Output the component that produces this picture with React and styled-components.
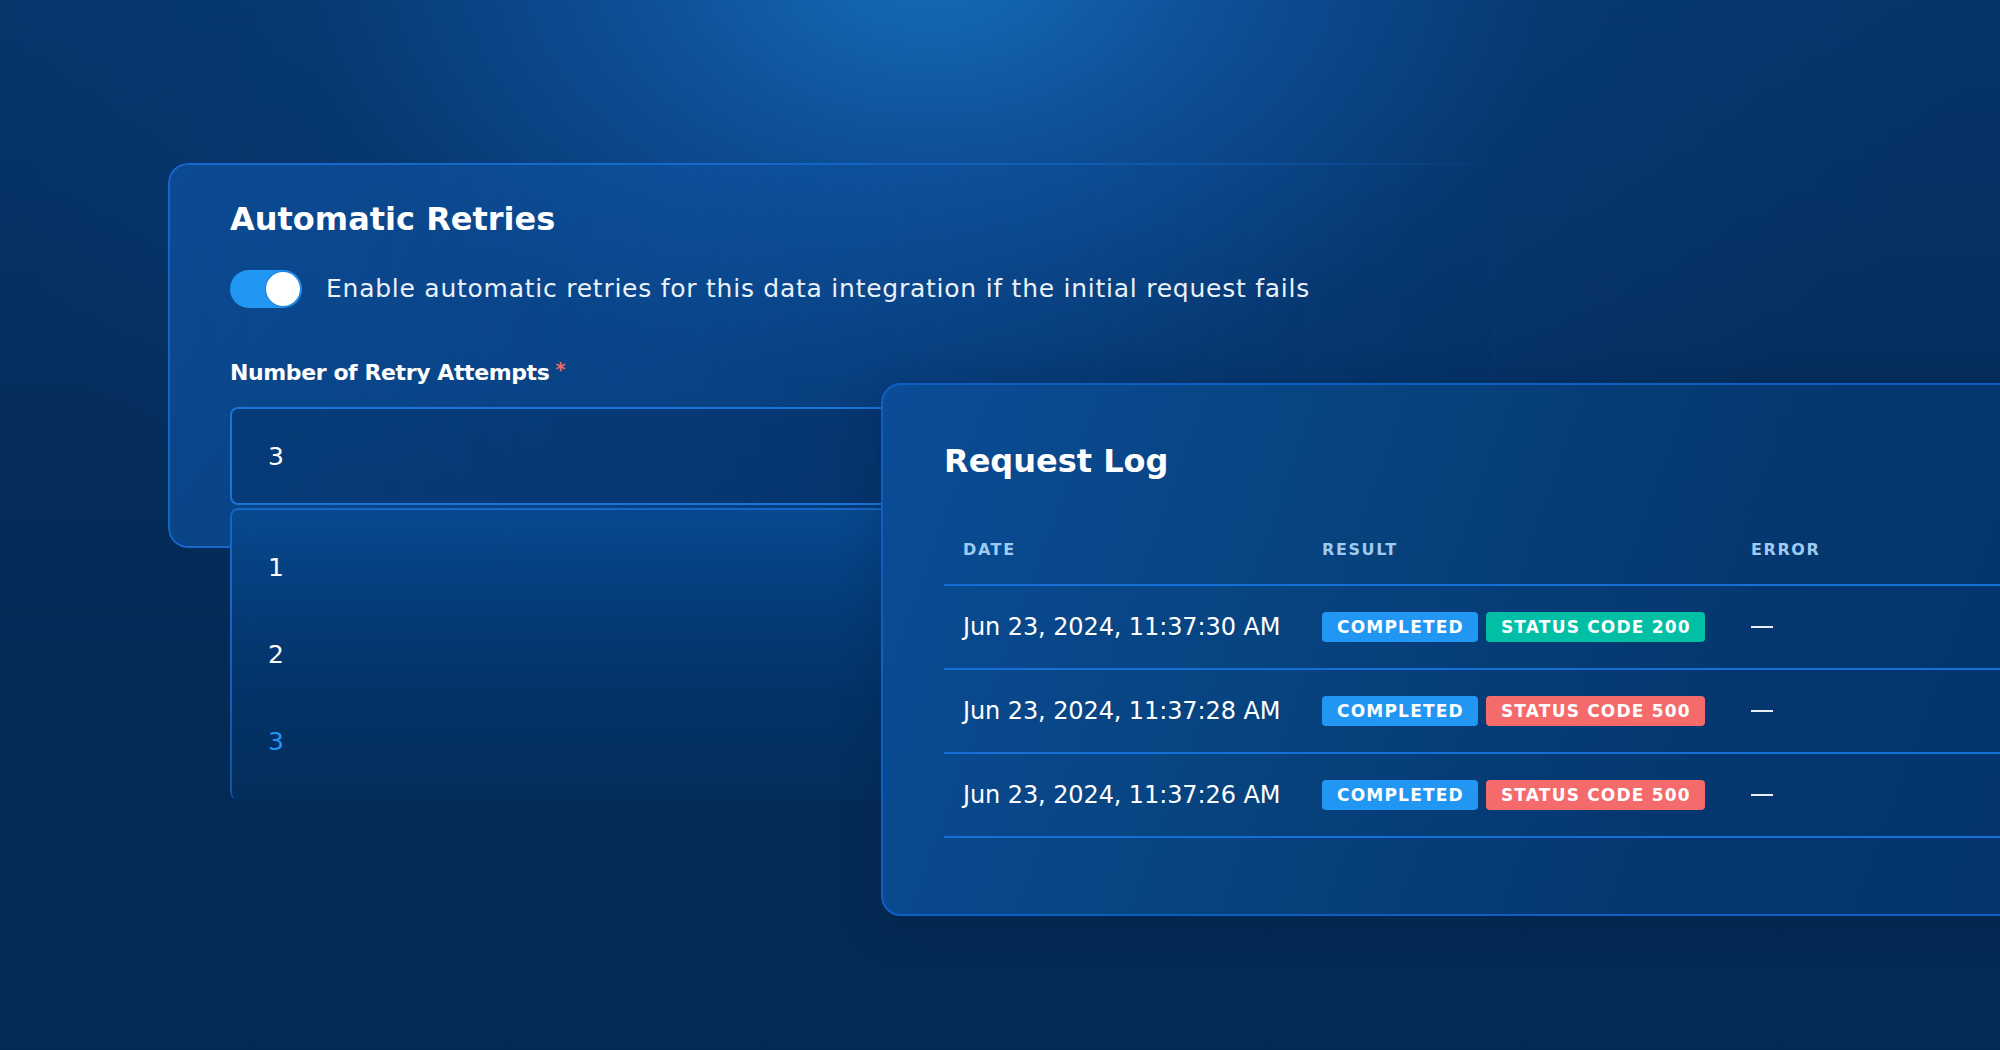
import React from "react";
import styled, { createGlobalStyle } from "styled-components";

const GlobalStyle = createGlobalStyle`
  html, body { margin: 0; padding: 0; }
  body {
    background: #042a55;
    font-family: "DejaVu Sans", Inter, "Liberation Sans", sans-serif;
    color: #ffffff;
    -webkit-font-smoothing: antialiased;
  }
  * { box-sizing: border-box; }
`;

const Stage = styled.div`
  position: relative;
  width: 2000px;
  height: 1050px;
  overflow: hidden;
  background:
    radial-gradient(ellipse 1050px 720px at 930px -40px, rgba(22, 108, 185, 1) 0%, rgba(14, 82, 155, 0.85) 30%, rgba(8, 58, 118, 0.6) 60%, rgba(4, 42, 85, 0) 100%),
    linear-gradient(180deg, #06346a 0%, #042b57 55%, #032a53 100%);
`;

const SettingsCard = styled.section`
  position: absolute;
  left: 168px;
  top: 163px;
  width: 1328px;
  height: 385px;
  padding: 36px 0 0 62px;
  display: flex;
  flex-direction: column;
  z-index: 1;

  &::before {
    content: "";
    position: absolute;
    inset: 0;
    border-radius: 20px;
    border: 2px solid rgba(24, 112, 215, 0.85);
    background: linear-gradient(100deg, rgba(16, 92, 178, 0.55) 0%, rgba(14, 86, 170, 0.4) 45%, rgba(14, 86, 170, 0.12) 100%);
    -webkit-mask-image: linear-gradient(to right, #000 0%, #000 40%, rgba(0, 0, 0, 0.05) 100%);
    mask-image: linear-gradient(to right, #000 0%, #000 40%, rgba(0, 0, 0, 0.05) 100%);
    z-index: -1;
  }
`;

const CardTitle = styled.h2`
  margin: 0;
  font-size: 32px;
  line-height: 40px;
  font-weight: 700;
  color: #ffffff;
`;

const ToggleRow = styled.div`
  display: flex;
  align-items: center;
  gap: 24px;
  margin-top: 31px;
  height: 38px;
`;

const Toggle = styled.div`
  position: relative;
  width: 72px;
  height: 38px;
  border-radius: 19px;
  background: #2196f3;
  flex-shrink: 0;

  &::after {
    content: "";
    position: absolute;
    right: 2px;
    top: 2px;
    width: 34px;
    height: 34px;
    border-radius: 50%;
    background: #ffffff;
    box-shadow: 0 0 0 1px rgba(33, 110, 210, 0.6);
  }
`;

const ToggleText = styled.span`
  font-size: 25px;
  line-height: 38px;
  letter-spacing: 0.75px;
  color: #eaf2fb;
`;

const FieldLabel = styled.label`
  margin-top: 46px;
  font-size: 22px;
  line-height: 30px;
  font-weight: 700;
  letter-spacing: -0.4px;
  color: #ffffff;
`;

const Required = styled.span`
  color: #f46a6a;
  margin-left: 6px;
  font-size: 19px;
  vertical-align: 4px;
`;

const InputBox = styled.div`
  margin-top: 19px;
  width: 1190px;
  height: 98px;
  border: 2px solid #1a74d8;
  border-radius: 8px;
  background: rgba(4, 40, 92, 0.35);
  display: flex;
  align-items: center;
  padding-left: 36px;
  font-size: 25px;
  color: #ffffff;
`;

const Dropdown = styled.ul`
  position: absolute;
  left: 62px;
  top: 345px;
  width: 1190px;
  height: 292px;
  margin: 0;
  padding: 16px 0 0 0;
  list-style: none;
  z-index: 2;

  &::before {
    content: "";
    position: absolute;
    inset: 0;
    border-radius: 8px;
    border: 2px solid #1767c9;
    border-bottom: none;
    background: linear-gradient(180deg, #07498f 0%, #053d7b 30%, #04346b 65%, #04305f 100%);
    -webkit-mask-image: linear-gradient(to bottom, #000 0%, #000 30%, rgba(0, 0, 0, 0.7) 100%);
    mask-image: linear-gradient(to bottom, #000 0%, #000 30%, rgba(0, 0, 0, 0.7) 100%);
    box-shadow: 0 8px 30px rgba(2, 24, 56, 0.35);
    z-index: -1;
  }
`;

const Option = styled.li`
  position: relative;
  height: 87px;
  display: flex;
  align-items: center;
  padding-left: 38px;
  font-size: 25px;
  color: ${(p) => (p.$selected ? "#2196f3" : "#ffffff")};
`;

const LogCard = styled.section`
  position: absolute;
  left: 881px;
  top: 383px;
  width: 1220px;
  height: 533px;
  border: 2px solid #0f5fc2;
  border-radius: 20px;
  background: linear-gradient(110deg, #0a4c96 0%, #07437f 35%, #053770 65%, #04336a 100%);
  padding: 56px 0 0 61px;
  z-index: 3;
  box-shadow: 0 10px 40px rgba(2, 22, 50, 0.25);
`;

const Table = styled.div`
  margin-top: 34px;
  width: 1100px;
`;

const Row = styled.div`
  display: grid;
  grid-template-columns: 359px 429px 1fr;
  height: ${(p) => (p.$header ? "71px" : "84px")};
  border-bottom: 2px solid #1470d6;
  align-items: center;
`;

const HeadCell = styled.div`
  padding-left: 19px;
  font-size: 16px;
  font-weight: 700;
  letter-spacing: 1.6px;
  color: #9ecbf2;
  text-transform: uppercase;
`;

const Cell = styled.div`
  padding-left: 19px;
  font-size: 24px;
  letter-spacing: -0.1px;
  color: #ffffff;
  display: flex;
  align-items: center;
  gap: 8px;
`;

const Badge = styled.span`
  display: inline-flex;
  align-items: center;
  height: 30px;
  padding: 0 14px 0 15px;
  border-radius: 4px;
  font-size: 17px;
  font-weight: 700;
  letter-spacing: 1.2px;
  color: #ffffff;
  background: ${(p) => p.$bg};
`;

const Dash = styled.span`
  display: inline-block;
  width: 22px;
  height: 2px;
  background: #e8eef6;
`;

const rows = [
  { date: "Jun 23, 2024, 11:37:30 AM", code: "200" },
  { date: "Jun 23, 2024, 11:37:28 AM", code: "500" },
  { date: "Jun 23, 2024, 11:37:26 AM", code: "500" },
];

export default function App() {
  return (
    <>
      <GlobalStyle />
      <Stage>
        <SettingsCard>
          <CardTitle>Automatic Retries</CardTitle>
          <ToggleRow>
            <Toggle />
            <ToggleText>
              Enable automatic retries for this data integration if the initial request fails
            </ToggleText>
          </ToggleRow>
          <FieldLabel>
            Number of Retry Attempts<Required>*</Required>
          </FieldLabel>
          <InputBox>3</InputBox>
          <Dropdown>
            <Option>1</Option>
            <Option>2</Option>
            <Option $selected>3</Option>
          </Dropdown>
        </SettingsCard>

        <LogCard>
          <CardTitle>Request Log</CardTitle>
          <Table>
            <Row $header>
              <HeadCell>Date</HeadCell>
              <HeadCell>Result</HeadCell>
              <HeadCell>Error</HeadCell>
            </Row>
            {rows.map((r) => (
              <Row key={r.date}>
                <Cell>{r.date}</Cell>
                <Cell>
                  <Badge $bg="#2196f3">COMPLETED</Badge>
                  <Badge $bg={r.code === "200" ? "#00bfa5" : "#f56a6a"}>
                    STATUS CODE {r.code}
                  </Badge>
                </Cell>
                <Cell>
                  <Dash />
                </Cell>
              </Row>
            ))}
          </Table>
        </LogCard>
      </Stage>
    </>
  );
}
